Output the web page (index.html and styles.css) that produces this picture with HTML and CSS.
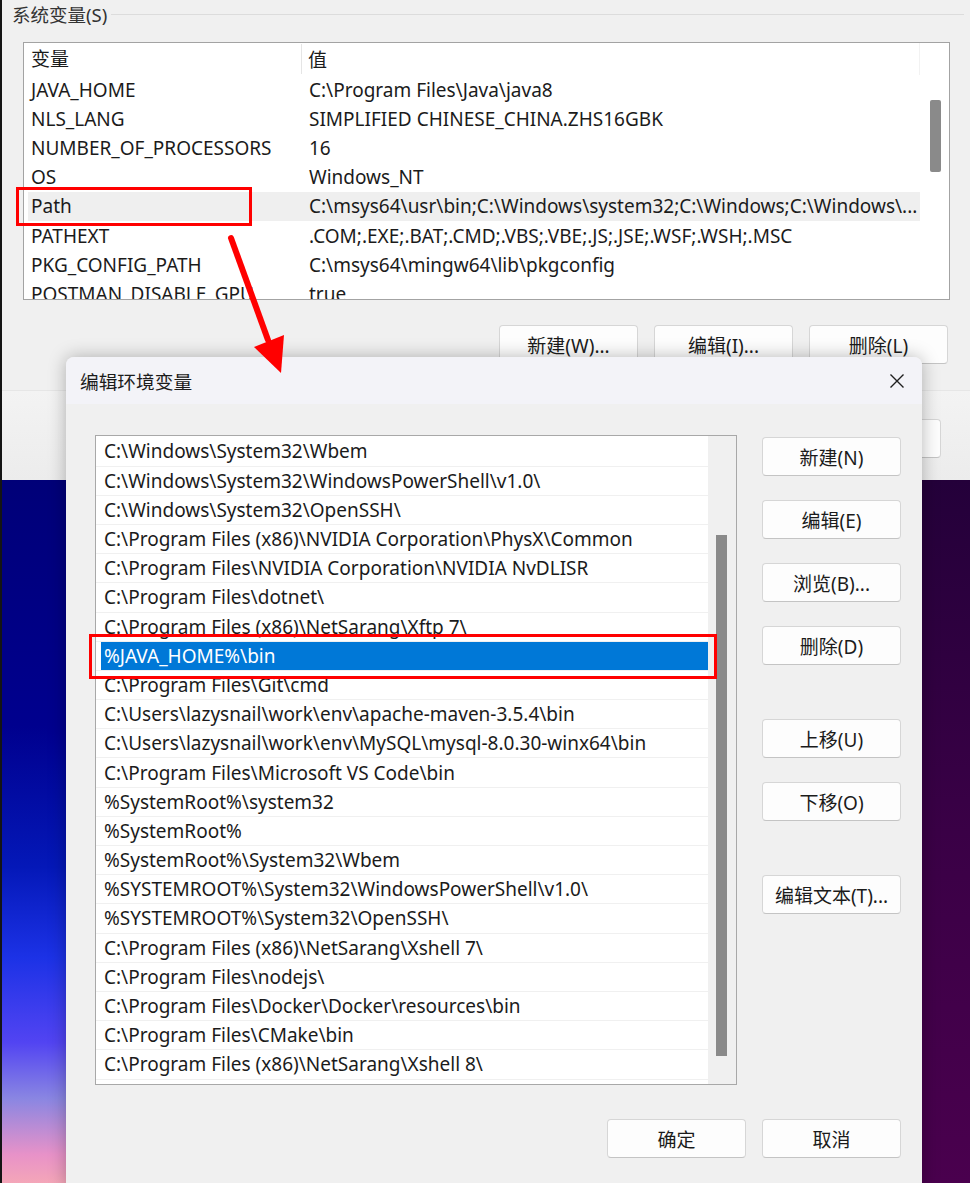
FILE: index.html
```html
<!DOCTYPE html>
<html lang="zh-CN">
<head>
  <meta charset="UTF-8" />
  <title>编辑环境变量</title>
  <link rel="stylesheet" href="styles.css">
</head>
<body>

  <div class="desktop">
    <!-- 后面的窗口：系统变量 -->
    <div class="sysvars">
      <div class="group-head">
        <span class="group-title">系统变量(S)</span>
        <span class="group-line"></span>
      </div>

      <div class="varlist">
        <div class="varlist-main">
          <div class="var-head">
            <div class="col-name">变量</div>
            <div class="col-value">值</div>
          </div>
          <div class="var-row"><div class="col-name">JAVA_HOME</div><div class="col-value">C:\Program Files\Java\java8</div></div>
          <div class="var-row"><div class="col-name">NLS_LANG</div><div class="col-value">SIMPLIFIED CHINESE_CHINA.ZHS16GBK</div></div>
          <div class="var-row"><div class="col-name">NUMBER_OF_PROCESSORS</div><div class="col-value">16</div></div>
          <div class="var-row"><div class="col-name">OS</div><div class="col-value">Windows_NT</div></div>
          <div class="var-row hover"><div class="col-name">Path</div><div class="col-value">C:\msys64\usr\bin;C:\Windows\system32;C:\Windows;C:\Windows\...</div></div>
          <div class="var-row"><div class="col-name">PATHEXT</div><div class="col-value">.COM;.EXE;.BAT;.CMD;.VBS;.VBE;.JS;.JSE;.WSF;.WSH;.MSC</div></div>
          <div class="var-row"><div class="col-name">PKG_CONFIG_PATH</div><div class="col-value">C:\msys64\mingw64\lib\pkgconfig</div></div>
          <div class="var-row"><div class="col-name">POSTMAN_DISABLE_GPU</div><div class="col-value">true</div></div>
        </div>
        <div class="var-scroll"><div class="var-thumb"></div></div>
      </div>

      <div class="var-buttons">
        <button class="btn">新建(W)...</button>
        <button class="btn">编辑(I)...</button>
        <button class="btn">删除(L)</button>
      </div>

      <div class="sys-footer">
        <button class="btn">确定</button>
        <button class="btn">取消</button>
      </div>
    </div>

    <div class="wallpaper"></div>
  </div>

  <!-- 前面的对话框：编辑环境变量 -->
  <div class="dialog">
    <div class="dialog-title">
      <span>编辑环境变量</span>
      <span class="close">
        <svg width="16" height="16" viewBox="0 0 16 16">
          <path d="M1.5 1.5 L14.5 14.5 M14.5 1.5 L1.5 14.5" stroke="#1f1f1f" stroke-width="1.4" fill="none"/>
        </svg>
      </span>
    </div>

    <div class="dialog-body">
      <div class="dialog-main">
        <div class="pathlist">
          <div class="path-rows">
            <div class="path-row">C:\Windows\System32\Wbem</div>
            <div class="path-row">C:\Windows\System32\WindowsPowerShell\v1.0\</div>
            <div class="path-row">C:\Windows\System32\OpenSSH\</div>
            <div class="path-row">C:\Program Files (x86)\NVIDIA Corporation\PhysX\Common</div>
            <div class="path-row">C:\Program Files\NVIDIA Corporation\NVIDIA NvDLISR</div>
            <div class="path-row">C:\Program Files\dotnet\</div>
            <div class="path-row">C:\Program Files (x86)\NetSarang\Xftp 7\</div>
            <div class="path-row selected"><span>%JAVA_HOME%\bin</span></div>
            <div class="path-row">C:\Program Files\Git\cmd</div>
            <div class="path-row">C:\Users\lazysnail\work\env\apache-maven-3.5.4\bin</div>
            <div class="path-row">C:\Users\lazysnail\work\env\MySQL\mysql-8.0.30-winx64\bin</div>
            <div class="path-row">C:\Program Files\Microsoft VS Code\bin</div>
            <div class="path-row">%SystemRoot%\system32</div>
            <div class="path-row">%SystemRoot%</div>
            <div class="path-row">%SystemRoot%\System32\Wbem</div>
            <div class="path-row">%SYSTEMROOT%\System32\WindowsPowerShell\v1.0\</div>
            <div class="path-row">%SYSTEMROOT%\System32\OpenSSH\</div>
            <div class="path-row">C:\Program Files (x86)\NetSarang\Xshell 7\</div>
            <div class="path-row">C:\Program Files\nodejs\</div>
            <div class="path-row">C:\Program Files\Docker\Docker\resources\bin</div>
            <div class="path-row">C:\Program Files\CMake\bin</div>
            <div class="path-row">C:\Program Files (x86)\NetSarang\Xshell 8\</div>
          </div>
          <div class="path-scroll"><div class="path-thumb"></div></div>
        </div>

        <div class="side-buttons">
          <button class="btn">新建(N)</button>
          <button class="btn">编辑(E)</button>
          <button class="btn">浏览(B)...</button>
          <button class="btn">删除(D)</button>
          <button class="btn gap-lg">上移(U)</button>
          <button class="btn">下移(O)</button>
          <button class="btn gap-lg">编辑文本(T)...</button>
        </div>
      </div>

      <div class="dialog-footer">
        <button class="btn">确定</button>
        <button class="btn">取消</button>
      </div>
    </div>
  </div>

  <!-- 标注 -->
  <div class="mark mark-path"></div>
  <div class="mark mark-java"></div>
  <svg class="arrow" width="970" height="1183" viewBox="0 0 970 1183">
    <line x1="231" y1="238" x2="268" y2="340" stroke="#ff0000" stroke-width="6" stroke-linecap="round"/>
    <polygon points="281,373 254,347 284,335" fill="#ff0000"/>
  </svg>

</body>
</html>
```

FILE: styles.css
```css
* {
  box-sizing: border-box;
}

body {
  margin: 0;
  width: 970px;
  height: 1183px;
  overflow: hidden;
  position: relative;
  background: #141414;
  font-family: "Noto Sans", "Noto Sans CJK SC", sans-serif;
  font-size: 19px;
  color: #1b1b1b;
}

.desktop {
  margin-left: 2px;
  height: 100%;
  display: flex;
  flex-direction: column;
}

/* 系统变量窗口 */
.sysvars {
  height: 480px;
  background: #f0f0f0;
  overflow: hidden;
  flex-shrink: 0;
}

.group-head {
  display: flex;
  align-items: center;
  height: 28px;
  padding-left: 10px;
}

.group-title {
  font-size: 18.5px;
  color: #333;
}

.group-line {
  flex: 1;
  height: 1px;
  background: #dcdcdc;
  margin: 0 6px 0 4px;
}

.varlist {
  display: flex;
  margin: 14px 0 0 21px;
  width: 927px;
  height: 258px;
  border: 1px solid #a3a3a3;
  background: #fff;
}

.varlist-main {
  width: 896px;
  overflow: hidden;
}

.var-head {
  display: flex;
  height: 32px;
  align-items: center;
  border-right: 1px solid #f2f2f2;
}

.var-head .col-name {
  width: 278px;
  padding-left: 7px;
  border-right: 1px solid #e5e5e5;
  height: 30px;
  line-height: 30px;
}

.var-head .col-value {
  padding-left: 6px;
}

.var-row {
  display: flex;
  align-items: center;
  height: 29.2px;
  margin-left: 4px;
  white-space: nowrap;
}

.var-row.hover {
  background: #efefef;
}

.var-row .col-name {
  width: 275px;
  padding-left: 3px;
}

.var-row .col-value {
  padding-left: 6px;
}

.var-scroll {
  flex: 1;
}

.var-thumb {
  margin: 57px 0 0 10px;
  width: 11px;
  height: 72px;
  background: #8a8a8a;
  border-radius: 2px;
}

.var-buttons {
  display: flex;
  justify-content: flex-end;
  gap: 16px;
  margin-top: 25px;
  padding-right: 22px;
}

.sys-footer {
  display: flex;
  justify-content: flex-end;
  gap: 16px;
  margin-top: 26px;
  height: 90px;
  padding: 28px 29px 0 0;
  border-top: 1px solid #e6e6e6;
  background: linear-gradient(to bottom, #f3f3f3, #ececec);
}

.btn {
  flex-shrink: 0;
  width: 139px;
  height: 39px;
  padding: 0;
  font-family: inherit;
  font-size: 19px;
  color: #1b1b1b;
  background: #fdfdfd;
  border: 1px solid #d6d6d6;
  border-bottom-color: #c4c4c4;
  border-radius: 4px;
}

.wallpaper {
  flex: 1;
  background:
    linear-gradient(to bottom, #000078 0%, #00008e 35%, #0418b8 55%, #1c32e6 68%, #5244f2 80%, #8a86e2 88%, #e892c8 96%, #f4a6b8 100%) no-repeat 0 0 / 400px 100%,
    linear-gradient(to bottom, #24003a 0%, #3a0046 50%, #4a004e 100%);
}

/* 编辑环境变量对话框 */
.dialog {
  position: absolute;
  left: 66px;
  top: 357px;
  width: 856px;
  height: 834px;
  background: #f0f0f0;
  border-radius: 8px;
  box-shadow: 0 0 18px rgba(0, 0, 0, 0.28);
  overflow: hidden;
}

.dialog-title {
  display: flex;
  align-items: center;
  justify-content: space-between;
  height: 47px;
  padding-left: 14px;
  font-size: 18.7px;
  background: #f3f3f8;
}

.close {
  width: 50px;
  height: 47px;
  display: flex;
  align-items: center;
  justify-content: center;
}

.dialog-body {
  padding: 31px 21px 0 29px;
}

.dialog-main {
  display: flex;
  gap: 25px;
}

.pathlist {
  display: flex;
  width: 642px;
  height: 650px;
  border: 1px solid #a8a8a8;
  background: #f0f0f0;
}

.path-rows {
  width: 612px;
  padding-top: 1.4px;
  background: #fff;
  overflow: hidden;
}

.path-row {
  display: flex;
  align-items: center;
  height: 29.2px;
  padding-left: 8px;
  border-bottom: 1px solid #f0f0f0;
  white-space: nowrap;
}

.path-row.selected {
  padding-left: 5px;
}

.path-row.selected span {
  flex: 1;
  height: 28px;
  line-height: 28px;
  padding-left: 3px;
  background: #0078d7;
  color: #fff;
}

.path-scroll {
  flex: 1;
}

.path-thumb {
  margin: 99px 0 0 8px;
  width: 11px;
  height: 521px;
  background: #8a8a8a;
}

.side-buttons {
  display: flex;
  flex-direction: column;
  gap: 24px;
  padding-top: 2px;
}

.side-buttons .gap-lg {
  margin-top: 30px;
}

.dialog-footer {
  display: flex;
  justify-content: flex-end;
  gap: 16px;
  margin-top: 34px;
}

/* 红色标注 */
.mark {
  position: absolute;
  border: 3px solid #ff0000;
}

.mark-path {
  left: 16px;
  top: 187px;
  width: 236px;
  height: 39px;
}

.mark-java {
  left: 89px;
  top: 634px;
  width: 628px;
  height: 45px;
}

.arrow {
  position: absolute;
  left: 0;
  top: 0;
  pointer-events: none;
}
```
